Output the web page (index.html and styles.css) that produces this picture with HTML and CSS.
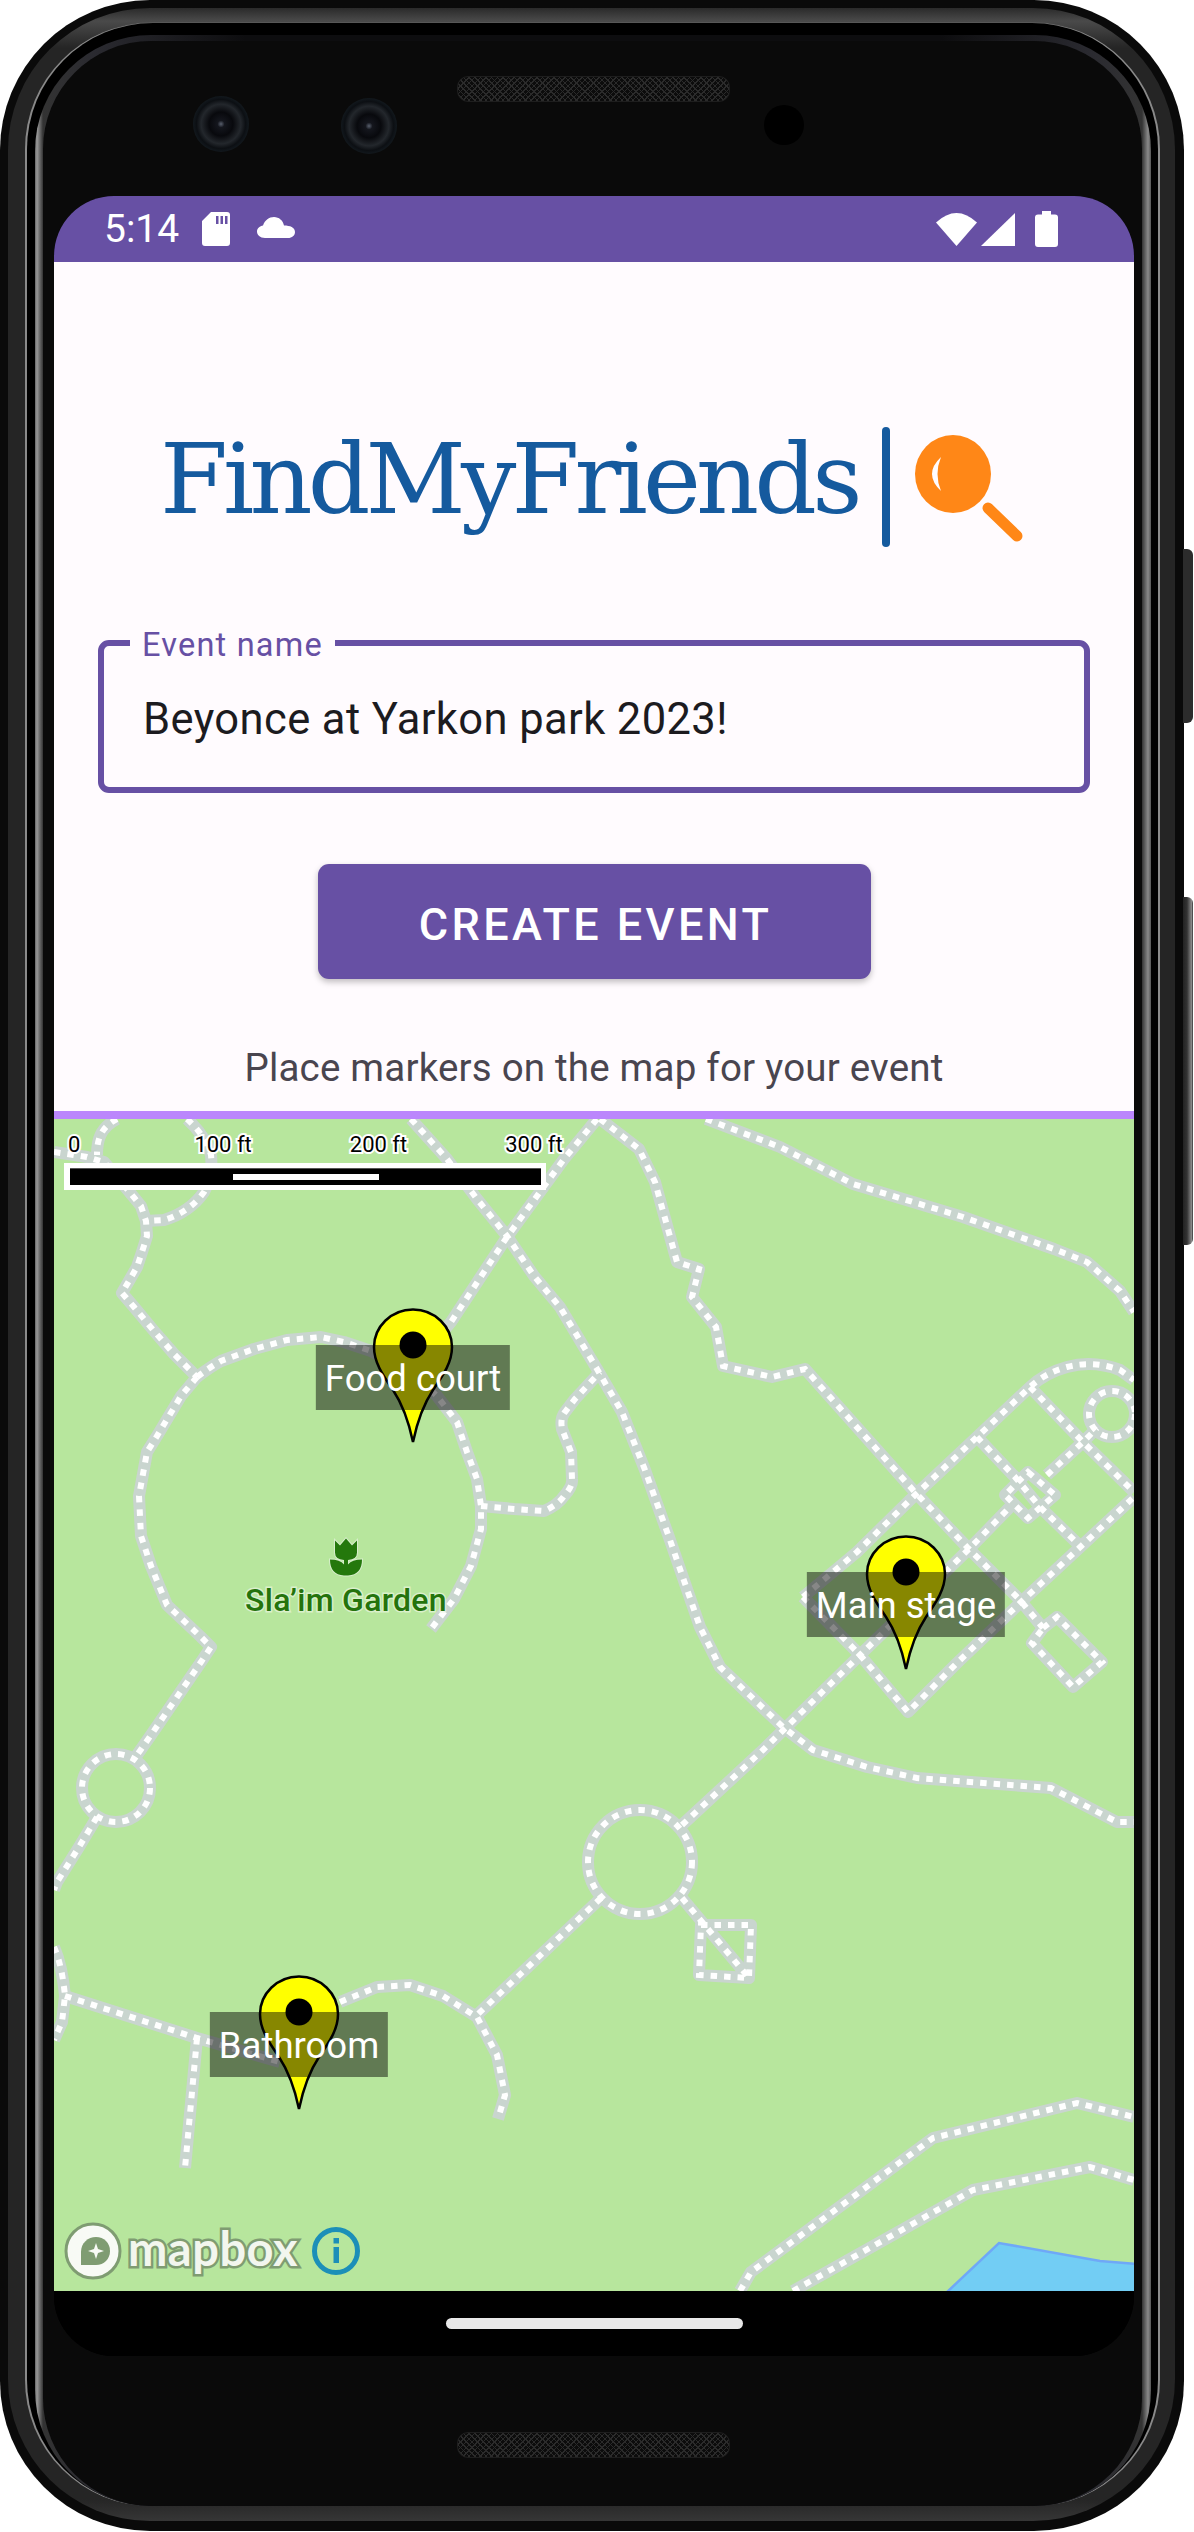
FILE: index.html

```html
<!DOCTYPE html>
<html lang="en">
<head>
  <meta charset="UTF-8">
  <title>FindMyFriends</title>
  <link rel="stylesheet" href="styles.css">
</head>
<body>
  <div class="phone">
    <div class="side-btn side-btn-power"></div>
    <div class="side-btn side-btn-volume"></div>
    <div class="shell">
      <div class="rim">
        <div class="bezel">
          <div class="face">
            <div class="sensors">
              <div class="lens lens-one"></div>
              <div class="lens lens-two"></div>
              <div class="speaker speaker-top"></div>
              <div class="prox"></div>
            </div>

            <div class="screen">
              <div class="status">
                <span class="time">5:14</span>
                <svg class="ic-sd" viewBox="0 0 28 34"><path fill="#fff" d="M9 0H25Q28 0 28 3V31Q28 34 25 34H3Q0 34 0 31V9Z M14 4V12H16.500V4Z M18.500 4V12H21V4Z M23 4V12H25.500V4Z" fill-rule="evenodd"/></svg>
                <svg class="ic-cloud" viewBox="0 0 38 21"><path fill="#fff" d="M8 21C3 21 0 18 0 14.500C0 11 3 9 6 8.500C8 3 12 0 17 0C22 0 26 3.500 27 8.500C33 8.500 38 10.500 38 15C38 18.500 35 21 31 21Z"/></svg>
                <div class="status-right">
                  <svg class="ic-wifi" viewBox="0 0 41 33"><path fill="#fff" d="M20.500 33L0 9.500Q20.500 -9.500 41 9.500Z"/></svg>
                  <svg class="ic-signal" viewBox="0 0 34 33"><path fill="#fff" d="M34 0V33H0Z"/></svg>
                  <svg class="ic-battery" viewBox="0 0 23 36"><path fill="#fff" d="M7 0H16V3.500H20Q23 3.500 23 6.500V33Q23 36 20 36H3Q0 36 0 33V6.500Q0 3.500 3 3.500H7Z"/></svg>
                </div>
              </div>

              <div class="app">
                <div class="logo">
                  <span class="logo-text">FindMyFriends</span>
                  <svg class="logo-mark" viewBox="880 427 144 120">
                    <rect x="882" y="427" width="8" height="120" rx="4" fill="#155a9e"/>
                    <ellipse cx="953" cy="474" rx="38" ry="39" fill="#ff8717"/>
                    <path d="M941 457Q923 474 941 491Q934 474 941 457Z" fill="#fffbfe"/>
                    <path d="M988 508L1017 536" stroke="#ff8717" stroke-width="11" stroke-linecap="round"/>
                  </svg>
                </div>

                <div class="field">
                  <span class="field-label">Event name</span>
                  <span class="field-value">Beyonce at Yarkon park 2023!</span>
                </div>

                <button class="create-btn">CREATE EVENT</button>

                <p class="hint">Place markers on the map for your event</p>

                <div class="map">
                  <svg class="map-base" viewBox="54 1119 1080 1172">
                    <defs>
                      <g id="trails">
                        <path d="M117 1119C100 1128 97 1140 97 1155"/>
                        <path d="M187 1119Q205 1135 211 1155Q213 1175 204 1192Q190 1212 164 1220L146 1221"/>
                        <path d="M54 1152L87 1157L104 1162L127 1189L141 1206L146 1221L147 1236L142 1252L137 1267L122 1293L134 1307L154 1331L174 1354L197 1377"/>
                        <path d="M197 1377Q210 1367 221 1361L254 1349L287 1340L321 1337L344 1342L371 1351L415 1375L437 1396L457 1422L467 1452L477 1479L481 1506L481 1529L471 1566L454 1599L431 1629"/>
                        <path d="M197 1377L181 1396L157 1436L147 1452L139 1496L141 1536L151 1566L167 1605L201 1637L211 1647L201 1662L177 1697L151 1735L137 1755"/>
                        <circle cx="116" cy="1788" r="34"/>
                        <path d="M97 1817L79 1847L57 1882L54 1890"/>
                        <path d="M481 1506L514 1509L544 1511Q558 1505 564 1496Q573 1486 572 1479L571 1452L562 1429Q560 1418 565 1412L575 1399L600 1372"/>
                        <path d="M597 1119L564 1159L507 1237L451 1322L415 1365"/>
                        <path d="M411 1119L447 1159L477 1199L507 1236L534 1276L560 1307L597 1369L622 1412L645 1470L670 1540L700 1627L720 1667L783 1727L813 1750L867 1767L917 1778L1051 1788L1117 1822L1134 1822"/>
                        <path d="M706 1119L780 1147L853 1184L963 1217L1054 1249L1087 1262L1120 1291L1134 1312"/>
                        <path d="M600 1119L639 1149L655 1182L677 1262L699 1269L692 1297L716 1327L723 1366L772 1377L805 1369L913 1490L967 1547L1020 1600L1043 1628"/>
                        <path d="M682 1825L763 1750L860 1655L970 1548L1010 1507"/>
                        <path d="M803 1597L857 1552L913 1497L977 1437L1030 1387Q1045 1373 1067 1367Q1093 1360 1120 1370L1134 1380"/>
                        <path d="M803 1597L860 1655L908 1712L957 1663L1020 1603L1077 1550L1134 1497"/>
                        <path d="M1030 1387L1083 1442L1134 1492"/>
                        <path d="M977 1437L1015 1477L1040 1507L1077 1543"/>
                        <path d="M1047 1475L1083 1442L1097 1428"/>
                        <path d="M1028 1472L1055 1495L1028 1518L1005 1495Z"/>
                        <circle cx="1112" cy="1414" r="23"/>
                        <path d="M1043 1628L1057 1617L1102 1662L1073 1687L1032 1643L1043 1628"/>
                        <circle cx="640" cy="1862" r="52"/>
                        <path d="M601 1898L477 2015"/>
                        <path d="M682 1898L749 1978"/>
                        <path d="M701 1925H751L749 1978L699 1975Z"/>
                        <path d="M340 2002L377 1987L410 1985L443 1996L477 2017L497 2055L505 2095L498 2119"/>
                        <path d="M65 1996L197 2038L280 2062"/>
                        <path d="M197 2038L185 2168"/>
                        <path d="M54 1947Q62 1965 65 1996L62 2022L54 2040"/>
                        <path d="M740 2291L751 2272L933 2138L1077 2103L1134 2117"/>
                        <path d="M793 2291L973 2190L1090 2167L1134 2180"/>
                      </g>
                    </defs>
                    <path class="water" d="M946 2293L999 2243L1100 2261L1136 2264V2293Z"/>
                    <use class="trail-casing" href="#trails"/>
                    <use class="trail-dash" href="#trails"/>
                  </svg>

                  <div class="scale">
                    <div class="scale-labels">
                      <span class="scale-zero">0</span>
                      <span>100 ft</span>
                      <span>200 ft</span>
                      <span>300 ft</span>
                    </div>
                    <div class="scale-bar">
                      <div class="scale-fill"><div class="scale-mid"></div></div>
                    </div>
                  </div>

                  <div class="poi">
                    <svg class="poi-icon" viewBox="1 0 34 39">
                      <path class="poi-shape" d="M7 3L12 8L18 1L24 8L29 3V15Q29 22 20 22.500V27Q24 22 34 22Q34 37 20 38H16Q2 37 2 22Q12 22 16 27V22.500Q7 22 7 15Z"/>
                    </svg>
                    <span class="poi-name">Sla’im Garden</span>
                  </div>

                  <div class="marker marker-food">
                    <svg class="pin" viewBox="0 0 82 136"><path d="M41 1.500C19 1.500 2 19 2 39C2 54 10 66 21 82C29 94 36 110 41 134C46 110 53 94 61 82C72 66 80 54 80 39C80 19 63 1.500 41 1.500Z" fill="#ff0" stroke="#000" stroke-width="2.500"/><circle cx="41" cy="37" r="13.500"/></svg>
                    <span class="marker-label">Food court</span>
                  </div>
                  <div class="marker marker-stage">
                    <svg class="pin" viewBox="0 0 82 136"><path d="M41 1.500C19 1.500 2 19 2 39C2 54 10 66 21 82C29 94 36 110 41 134C46 110 53 94 61 82C72 66 80 54 80 39C80 19 63 1.500 41 1.500Z" fill="#ff0" stroke="#000" stroke-width="2.500"/><circle cx="41" cy="37" r="13.500"/></svg>
                    <span class="marker-label">Main stage</span>
                  </div>
                  <div class="marker marker-bath">
                    <svg class="pin" viewBox="0 0 82 136"><path d="M41 1.500C19 1.500 2 19 2 39C2 54 10 66 21 82C29 94 36 110 41 134C46 110 53 94 61 82C72 66 80 54 80 39C80 19 63 1.500 41 1.500Z" fill="#ff0" stroke="#000" stroke-width="2.500"/><circle cx="41" cy="37" r="13.500"/></svg>
                    <span class="marker-label">Bathroom</span>
                  </div>

                  <div class="attribution">
                    <svg class="mb-mark" viewBox="0 0 58 58">
                      <circle cx="29" cy="29" r="27" fill="#f8faf5" stroke="#7f9c72" stroke-width="3"/>
                      <path d="M17 43V30C17 21 24 15 32 15C40 15 46 21 46 29C46 37 40 43 32 43Z" fill="#7f9c72"/>
                      <path d="M32 21L34 27L40 29L34 31L32 37L30 31L24 29L30 27Z" fill="#f8faf5"/>
                    </svg>
                    <span class="mb-word">mapbox</span>
                    <svg class="mb-info" viewBox="0 0 48 48">
                      <circle cx="24" cy="24" r="21.500" fill="none" stroke="#1c8fb8" stroke-width="5"/>
                      <rect x="21.500" y="11" width="5.500" height="5.500" fill="#1c8fb8"/>
                      <rect x="21.500" y="20" width="5.500" height="16" fill="#1c8fb8"/>
                    </svg>
                  </div>
                </div>
              </div>

              <div class="nav"><div class="pill"></div></div>
            </div>

            <div class="speaker speaker-bottom"></div>
          </div>
        </div>
      </div>
    </div>
  </div>
</body>
</html>
```

FILE: styles.css

```css
html, body {
  margin: 0;
  background: #fff;
}
body {
  width: 1194px;
  height: 2532px;
  overflow: hidden;
  font-family: 'Roboto', sans-serif;
}

/* device frame */
.phone {
  position: relative;
  box-sizing: border-box;
  width: 1184px;
  height: 2531px;
  padding: 8px 9px 10px 8px;
  background: #0a0a0a;
  border-radius: 150px;
  display: flex;
}
.side-btn {
  position: absolute;
  left: 1183px;
  width: 10px;
  background: #2c2c2c;
  border-radius: 0 6px 6px 0;
}
.side-btn-power {
  top: 549px;
  height: 174px;
}
.side-btn-volume {
  top: 897px;
  height: 348px;
  background: linear-gradient(90deg, #222 0, #333 40%, #888 85%, #333 100%);
}
.shell {
  flex: 1;
  display: flex;
  padding: 15px 17px 15px 19px;
  border-radius: 142px;
  background: linear-gradient(180deg, #2a2a2a 0, #4a4a4a 13px, #252525 40px, #252525 calc(100% - 22px), #363636 100%);
}
.rim {
  flex: 1;
  display: flex;
  padding: 12px 7px 0 8px;
  background: #000;
  border-radius: 126px;
  box-shadow: -2px 0 0 #8a8a8a, 2px 0 0 #8a8a8a, 0 -1px 0 #575757;
}
.bezel {
  flex: 1;
  display: flex;
  padding: 6px 9px 0 8px;
  border-radius: 116px;
  background: linear-gradient(90deg, #666 0, #9a9a9a 2px, #333 8px, #2a2a30 60px, #0d0d0f 210px, #0d0d0f calc(100% - 210px), #2a2a30 calc(100% - 60px), #333 calc(100% - 9px), #8a8a8a calc(100% - 3px), #555 100%);
}
.face {
  flex: 1;
  display: flex;
  flex-direction: column;
  padding: 0 8px 0 11px;
  background: #0a0a0a;
  border-radius: 108px;
}
.sensors {
  height: 155px;
  display: flex;
  align-items: flex-start;
  padding-left: 139px;
}
.lens {
  width: 56px;
  height: 56px;
  border-radius: 50%;
  background: radial-gradient(circle at 50% 50%, #59606e 0, #14161d 9%, #08090d 30%, #23272c 50%, #0c0f13 62%, #172026 78%);
}
.lens-one {
  margin-top: 55px;
}
.lens-two {
  margin: 57px 0 0 92px;
}
.speaker {
  width: 273px;
  height: 26px;
  box-sizing: border-box;
  border: 1px solid #1e1e1e;
  border-radius: 11px;
  background:
    repeating-linear-gradient(45deg, #2b2b2b 0, #2b2b2b 1px, transparent 1px, transparent 4px),
    repeating-linear-gradient(-45deg, #2b2b2b 0, #2b2b2b 1px, #0c0c0c 1px, #0c0c0c 4px);
}
.speaker-top {
  margin: 35px 0 0 60px;
}
.speaker-bottom {
  margin: 76px 0 0 403px;
}
.prox {
  width: 40px;
  height: 40px;
  margin: 64px 0 0 34px;
  border-radius: 50%;
  background: #000;
}

/* screen */
.screen {
  height: 2160px;
  display: flex;
  flex-direction: column;
  background: #000;
  border-radius: 60px;
  overflow: hidden;
}
.status {
  height: 66px;
  flex: none;
  display: flex;
  align-items: center;
  padding: 0 76px 0 50px;
  background: #6750a4;
  color: #fff;
}
.time {
  width: 75px;
  font-size: 39px;
  margin-top: -1px;
}
.ic-sd {
  width: 28px;
  height: 34px;
  margin: 0 0 0 23px;
}
.ic-cloud {
  width: 38px;
  height: 21px;
  margin: -4px 0 0 27px;
}
.status-right {
  margin-left: auto;
  display: flex;
  align-items: center;
}
.ic-wifi {
  width: 41px;
  height: 33px;
}
.ic-signal {
  width: 34px;
  height: 33px;
  margin-left: 4px;
}
.ic-battery {
  width: 23px;
  height: 36px;
  margin-left: 20px;
}

.app {
  flex: 1;
  display: flex;
  flex-direction: column;
  background: #fffbfe;
}
.logo {
  height: 120px;
  display: flex;
  align-items: flex-start;
  margin-top: 165px;
  padding-left: 106px;
}
.logo-text {
  width: 720px;
  margin-top: -8px;
  font-family: 'DejaVu Serif', serif;
  font-size: 98px;
  line-height: 120px;
  letter-spacing: -4.900px;
  color: #155a9e;
  white-space: nowrap;
}
.logo-mark {
  width: 144px;
  height: 120px;
}

.field {
  position: relative;
  box-sizing: border-box;
  height: 153px;
  margin: 93px 44px 0;
  padding: 6px 39px 0;
  border: 6px solid #6750a4;
  border-radius: 11px;
  display: flex;
  align-items: center;
}
.field-label {
  position: absolute;
  top: -20px;
  left: 26px;
  padding: 0 12px;
  background: #fffbfe;
  color: #6750a4;
  font-size: 32.500px;
  line-height: 38px;
  letter-spacing: 1.200px;
}
.field-value {
  font-size: 43.500px;
  letter-spacing: 0.400px;
  color: #1c1b1f;
}

.create-btn {
  width: 553px;
  height: 115px;
  margin: 71px auto 0;
  padding: 5px 0 0 3px;
  border: none;
  border-radius: 11px;
  background: #6750a4;
  color: #fff;
  font-family: 'Roboto', sans-serif;
  font-size: 45px;
  font-weight: 500;
  letter-spacing: 3.400px;
  box-shadow: 0 3px 6px rgba(0,0,0,0.25);
}
.hint {
  height: 132px;
  box-sizing: border-box;
  flex: none;
  margin: 0;
  padding-top: 64px;
  text-align: center;
  font-size: 38.500px;
  line-height: 50px;
  letter-spacing: 0.200px;
  color: #49454f;
}

/* map */
.map {
  position: relative;
  flex: 1;
  overflow: hidden;
  border-top: 8px solid #bb86fc;
  background: #b7e69d;
}
.map-base {
  position: absolute;
  left: 0;
  top: 0;
  width: 1080px;
  height: 1172px;
}
.water {
  fill: #72cdf4;
  stroke: #6fa8f7;
  stroke-width: 2.500;
}
.trail-casing {
  fill: none;
  stroke: #c9d5cf;
  stroke-width: 12;
  stroke-linejoin: round;
}
.trail-dash {
  fill: none;
  stroke: #fff;
  stroke-width: 6;
  stroke-dasharray: 6.500 7;
}

.scale {
  position: absolute;
  left: 10px;
  top: 10px;
  width: 482px;
}
.scale-labels {
  display: flex;
  gap: 98px;
  height: 34px;
  font-size: 22px;
  line-height: 32px;
  color: #000;
  white-space: nowrap;
  -webkit-text-stroke: 4px #fff;
  paint-order: stroke fill;
}
.scale-zero {
  margin: 0 16px 0 4px;
}
.scale-bar {
  box-sizing: border-box;
  height: 27px;
  padding: 5px 5px 5px 6px;
  background: #fff;
}
.scale-fill {
  height: 100%;
  display: flex;
  align-items: center;
  justify-content: center;
  background: #000;
  border-top: 1px solid #555;
  box-sizing: border-box;
}
.scale-mid {
  width: 146px;
  height: 6px;
  background: #fff;
}

.poi {
  position: absolute;
  left: 142px;
  top: 418px;
  width: 300px;
  display: flex;
  flex-direction: column;
  align-items: center;
  color: #24730c;
}
.poi-icon {
  width: 34px;
  height: 40px;
}
.poi-shape {
  fill: #24780c;
  stroke: #d7eecb;
  stroke-width: 2;
  paint-order: stroke fill;
}
.poi-name {
  margin-top: 2px;
  font-size: 32px;
  font-weight: 500;
  line-height: 42px;
  letter-spacing: 0.300px;
  -webkit-text-stroke: 3px rgba(235,245,225,0.7);
  paint-order: stroke fill;
}

.marker {
  position: absolute;
  width: 0;
  height: 0;
}
.marker-food {
  left: 359px;
  top: 226px;
}
.marker-stage {
  left: 852px;
  top: 453px;
}
.marker-bath {
  left: 245px;
  top: 893px;
}
.pin {
  position: absolute;
  left: -41px;
  top: -37px;
  width: 82px;
  height: 136px;
}
.marker-label {
  position: absolute;
  top: 0;
  left: 0;
  transform: translateX(-50%);
  padding: 3px 9px 0;
  background: rgba(0,0,0,0.47);
  color: #fff;
  font-size: 36.500px;
  line-height: 62px;
  white-space: nowrap;
}

.attribution {
  position: absolute;
  left: 10px;
  bottom: 11px;
  display: flex;
  align-items: center;
}
.mb-mark {
  width: 58px;
  height: 58px;
}
.mb-word {
  width: 170px;
  margin: -6px 0 0 6px;
  font-family: 'Lato', sans-serif;
  font-size: 47px;
  font-weight: 700;
  line-height: 58px;
  letter-spacing: 0.500px;
  color: #f2f6ee;
  -webkit-text-stroke: 5px #7f9c72;
  paint-order: stroke fill;
}
.mb-info {
  width: 48px;
  height: 48px;
  margin-left: 14px;
}

.nav {
  height: 65px;
  flex: none;
  display: flex;
  align-items: center;
  justify-content: center;
  background: #000;
}
.pill {
  width: 297px;
  height: 11px;
  border-radius: 6px;
  background: #e8e8e8;
}
```
